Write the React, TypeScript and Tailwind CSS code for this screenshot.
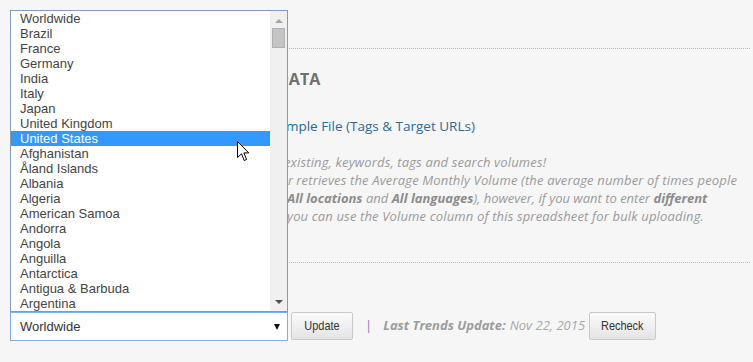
import React from "react";

const countries = [
  "Worldwide",
  "Brazil",
  "France",
  "Germany",
  "India",
  "Italy",
  "Japan",
  "United Kingdom",
  "United States",
  "Afghanistan",
  "Åland Islands",
  "Albania",
  "Algeria",
  "American Samoa",
  "Andorra",
  "Angola",
  "Anguilla",
  "Antarctica",
  "Antigua & Barbuda",
  "Argentina",
];

// the start of each line sits under the open dropdown, so only an indent is kept
function Line({ w, children }: { w: string; children: React.ReactNode }) {
  return (
    <div className="flex whitespace-nowrap">
      <span className={`shrink-0 ${w}`} />
      {children}
    </div>
  );
}

function Cursor() {
  return (
    <svg
      className="pointer-events-none absolute left-[237px] top-[141px]"
      width="13"
      height="21"
      viewBox="0 0 13 21"
    >
      <path
        d="M0.5 0.5 L0.5 16.5 L4.5 12.8 L7.2 19.5 L9.6 18.5 L6.9 11.9 L11.8 11.9 Z"
        fill="#fff"
        stroke="#000"
        strokeWidth="1"
        strokeLinejoin="miter"
      />
    </svg>
  );
}

function Button({ label, w }: { label: string; w: string }) {
  return (
    <button
      className={`flex h-[28px] items-center justify-center rounded-[2px] border border-[#c9c9c9] bg-gradient-to-b from-[#fbfbfb] to-[#e4e4e4] text-[13px] text-[#333] ${w}`}
    >
      <span className="inline-block scale-x-[0.84]">{label}</span>
    </button>
  );
}

function CountrySelect() {
  return (
    <div className="relative w-[278px] shrink-0">
      <div className="absolute bottom-full left-0 flex h-[302px] w-[278px] border border-[#7f9db9] bg-white">
        <div className="flex-1">
          {countries.map((c) => (
            <div
              key={c}
              className={`h-[15px] pl-[9px] text-[13px] leading-[15px] whitespace-nowrap ${
                c === "United States" ? "bg-[#3399ff] text-white" : "text-[#444]"
              }`}
            >
              {c}
            </div>
          ))}
        </div>
        <div className="flex w-[17px] flex-col items-center bg-[#f0f0f0]">
          <div className="mt-[8px] h-0 w-0 border-x-[4px] border-b-[4px] border-x-transparent border-b-[#a3a3a3]" />
          <div className="mt-[5px] h-[20px] w-[13px] border border-[#b0b0b0] bg-[#c4c4c4]" />
          <div className="flex-1" />
          <div className="mb-[7px] h-0 w-0 border-x-[4px] border-t-[4px] border-x-transparent border-t-[#505050]" />
        </div>
      </div>
      <div className="flex h-[29px] items-center justify-between border border-[#7eadeb] bg-white pl-[9px] pr-[7px] text-[13px] text-[#333]">
        <span>Worldwide</span>
        <span className="h-0 w-0 border-x-[3px] border-t-[6px] border-x-transparent border-t-[#111]" />
      </div>
    </div>
  );
}

export default function App() {
  return (
    <div className="relative h-[362px] w-[753px] overflow-hidden bg-[#f6f6f6] font-['Liberation_Sans',Arial,sans-serif]">
      <div className="ml-[10px] mt-[48px] w-[740px] border-t border-dotted border-[#b8b8b8]" />

      <div className="ml-[20px] font-['Open_Sans',sans-serif]">
        <div className="mt-[19px] text-[16px] font-bold leading-[22px] text-[#707070]">
          <Line w="w-[257px]">
            <span>DATA</span>
          </Line>
        </div>

        <div className="mt-[26px] text-[13.5px] leading-[20px] text-[#2b6a99]">
          <Line w="w-[251px]">
            <span>Sample File (Tags &amp; Target URLs)</span>
          </Line>
        </div>

        <div className="mt-[17px] text-[13px] italic leading-[18px] tracking-[0.15px] text-[#9a9a9a]">
          <Line w="w-[264px]">
            <span>existing, keywords, tags and search volumes!</span>
          </Line>
          <Line w="w-[268px]">
            <span>r</span>
            <span className="ml-[3px]">
              retrieves the Average Monthly Volume (the average number of times people
            </span>
          </Line>
          <Line w="w-[267px]">
            <span className="tracking-[0px]">
              <b className="text-[#8c8c8c]">All locations</b> and{" "}
              <b className="text-[#8c8c8c]">All languages</b>), however, if you want to enter{" "}
              <b className="text-[#8c8c8c]">different</b>
            </span>
          </Line>
          <Line w="w-[267px]">
            <span>you can use the Volume column of this spreadsheet for bulk uploading.</span>
          </Line>
        </div>
      </div>

      <div className="ml-[10px] mt-[37px] w-[740px] border-t border-dotted border-[#b8b8b8]" />

      <div className="ml-[10px] mt-[49px] flex items-start">
        <CountrySelect />
        <div className="ml-[3px]">
          <Button label="Update" w="w-[62px]" />
        </div>
        <div className="flex h-[28px] items-center font-['Open_Sans',sans-serif] text-[13px] italic">
          <span className="ml-[12px] not-italic text-[#9370c8]">|</span>
          <span className="ml-[11px] font-bold text-[#9c9c9c]">Last Trends Update:</span>
          <span className="ml-[4px] text-[#a8a8a8]">Nov 22, 2015</span>
        </div>
        <div className="ml-[4px]">
          <Button label="Recheck" w="w-[67px]" />
        </div>
      </div>

      <Cursor />
    </div>
  );
}
